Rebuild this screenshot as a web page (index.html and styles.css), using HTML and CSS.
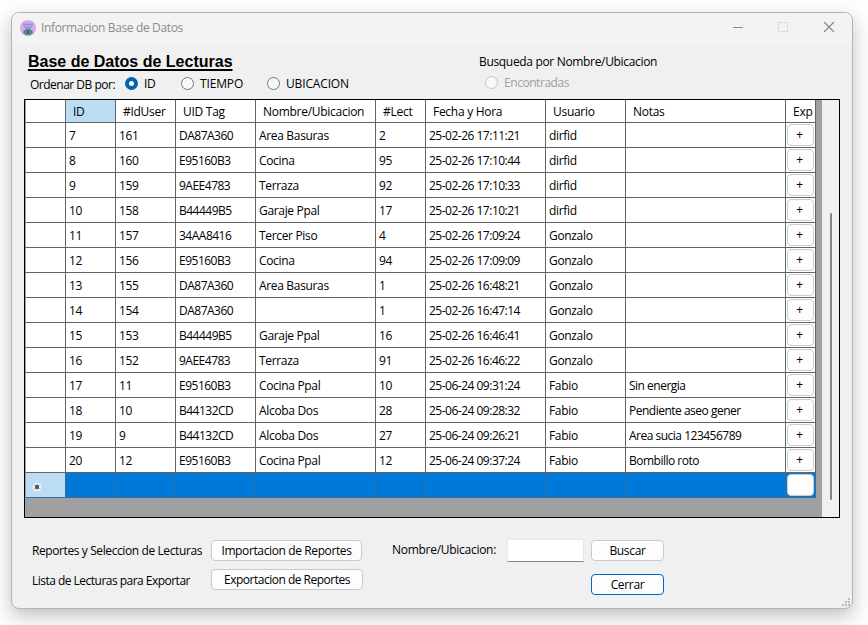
FILE: index.html
```html
<!DOCTYPE html>
<html lang="es">
<head>
<meta charset="utf-8">
<title>Informacion Base de Datos</title>
<link rel="stylesheet" href="styles.css">
</head>
<body>
<main class="window">
  <header class="titlebar">
    <svg class="app-icon" width="16" height="16" viewBox="0 0 16 16">
      <circle cx="8" cy="8" r="8" fill="#dcabea"/>
      <path d="M2 3.500Q8 1 14 3.500L12 8H4Z" fill="#b4a6e6"/>
      <path d="M3 4.500h10M4 7h8" stroke="#8c90d6" stroke-width="1.200"/>
      <path d="M5 8h6l-1 3H6Z" fill="#8296bc"/>
      <ellipse cx="8" cy="12.300" rx="5" ry="3.200" fill="#7397a0"/>
      <path d="M4 12q4-4 8 0q-4 4-8 0" fill="none" stroke="#4b6b74"/>
      <circle cx="8" cy="12" r="1.300" fill="#3c5a62"/>
    </svg>
    <span class="window-title">Informacion Base de Datos</span>
    <svg class="controls" width="104" height="12" viewBox="0 0 104 12" fill="none">
      <path d="M1 6.500h10" stroke="#8c8c8c"/>
      <rect x="46.500" y="1.500" width="9" height="9" stroke="#dcdcdc"/>
      <path d="M92 1l10 10M102 1L92 11" stroke="#858585" stroke-width="1.100"/>
    </svg>
  </header>

  <section class="top">
    <div class="sorting">
      <h1>Base de Datos de Lecturas</h1>
      <div class="options">
        <span class="order-label">Ordenar DB por:</span>
        <span class="option opt-id"><i class="radio checked"></i><span>ID</span></span>
        <span class="option opt-time"><i class="radio"></i><span>TIEMPO</span></span>
        <span class="option opt-place"><i class="radio"></i><span>UBICACION</span></span>
      </div>
    </div>
    <div class="search-info">
      <div class="search-title">Busqueda por Nombre/Ubicacion</div>
      <span class="option disabled"><i class="radio"></i><span>Encontradas</span></span>
    </div>
  </section>

  <section class="grid">
    <div class="rows">
      <div class="row head"><b></b><b class="sorted">ID</b><b>#IdUser</b><b>UID Tag</b><b>Nombre/Ubicacion</b><b>#Lect</b><b>Fecha y Hora</b><b>Usuario</b><b>Notas</b><b>Exp</b></div>
      <div class="row"><b></b><b>7</b><b>161</b><b>DA87A360</b><b>Area Basuras</b><b>2</b><b>25-02-26 17:11:21</b><b>dirfid</b><b></b><b><button>+</button></b></div>
      <div class="row"><b></b><b>8</b><b>160</b><b>E95160B3</b><b>Cocina</b><b>95</b><b>25-02-26 17:10:44</b><b>dirfid</b><b></b><b><button>+</button></b></div>
      <div class="row"><b></b><b>9</b><b>159</b><b>9AEE4783</b><b>Terraza</b><b>92</b><b>25-02-26 17:10:33</b><b>dirfid</b><b></b><b><button>+</button></b></div>
      <div class="row"><b></b><b>10</b><b>158</b><b>B44449B5</b><b>Garaje Ppal</b><b>17</b><b>25-02-26 17:10:21</b><b>dirfid</b><b></b><b><button>+</button></b></div>
      <div class="row"><b></b><b>11</b><b>157</b><b>34AA8416</b><b>Tercer Piso</b><b>4</b><b>25-02-26 17:09:24</b><b>Gonzalo</b><b></b><b><button>+</button></b></div>
      <div class="row"><b></b><b>12</b><b>156</b><b>E95160B3</b><b>Cocina</b><b>94</b><b>25-02-26 17:09:09</b><b>Gonzalo</b><b></b><b><button>+</button></b></div>
      <div class="row"><b></b><b>13</b><b>155</b><b>DA87A360</b><b>Area Basuras</b><b>1</b><b>25-02-26 16:48:21</b><b>Gonzalo</b><b></b><b><button>+</button></b></div>
      <div class="row"><b></b><b>14</b><b>154</b><b>DA87A360</b><b></b><b>1</b><b>25-02-26 16:47:14</b><b>Gonzalo</b><b></b><b><button>+</button></b></div>
      <div class="row"><b></b><b>15</b><b>153</b><b>B44449B5</b><b>Garaje Ppal</b><b>16</b><b>25-02-26 16:46:41</b><b>Gonzalo</b><b></b><b><button>+</button></b></div>
      <div class="row"><b></b><b>16</b><b>152</b><b>9AEE4783</b><b>Terraza</b><b>91</b><b>25-02-26 16:46:22</b><b>Gonzalo</b><b></b><b><button>+</button></b></div>
      <div class="row"><b></b><b>17</b><b>11</b><b>E95160B3</b><b>Cocina Ppal</b><b>10</b><b>25-06-24 09:31:24</b><b>Fabio</b><b>Sin energia</b><b><button>+</button></b></div>
      <div class="row"><b></b><b>18</b><b>10</b><b>B44132CD</b><b>Alcoba Dos</b><b>28</b><b>25-06-24 09:28:32</b><b>Fabio</b><b>Pendiente aseo gener</b><b><button>+</button></b></div>
      <div class="row"><b></b><b>19</b><b>9</b><b>B44132CD</b><b>Alcoba Dos</b><b>27</b><b>25-06-24 09:26:21</b><b>Fabio</b><b>Area sucia 123456789</b><b><button>+</button></b></div>
      <div class="row"><b></b><b>20</b><b>12</b><b>E95160B3</b><b>Cocina Ppal</b><b>12</b><b>25-06-24 09:37:24</b><b>Fabio</b><b>Bombillo roto</b><b><button>+</button></b></div>
      <div class="row selected"><b><svg width="8" height="8" viewBox="0 0 8 8"><circle cx="4" cy="4" r="3.900" fill="#fff"/><circle cx="4" cy="4" r="2" fill="#444"/><path d="M4 1v6M1.400 2.500l5.200 3M6.600 2.500l-5.200 3" stroke="#555" stroke-width="1"/></svg></b><b></b><b></b><b></b><b></b><b></b><b></b><b></b><b></b><b><button></button></b></div>
    </div>
    <div class="scrollbar"><div class="thumb"></div></div>
  </section>

  <footer class="bottom">
    <div class="labels">
      <span class="lbl-reports">Reportes y Seleccion de Lecturas</span>
      <span class="lbl-list">Lista de Lecturas para Exportar</span>
    </div>
    <div class="actions">
      <button class="btn import"><span>Importacion de Reportes</span></button>
      <button class="btn export"><span>Exportacion de Reportes</span></button>
    </div>
    <label class="search-label" for="q">Nombre/Ubicacion:</label>
    <input id="q" class="search-box" type="text">
    <div class="commands">
      <button class="btn">Buscar</button>
      <button class="btn primary">Cerrar</button>
    </div>
    <svg class="grip" width="9" height="9" viewBox="0 0 9 9" fill="#bcbcbc">
      <path d="M6 0h2v2H6zM3 3h2v2H3zM6 3h2v2H6zM0 6h2v2H0zM3 6h2v2H3zM6 6h2v2H6z"/>
    </svg>
  </footer>
</main>
</body>
</html>
```
FILE: styles.css
```css
* { box-sizing: border-box; }
body {
  margin: 0;
  height: 625px;
  padding: 12px 0 0 11px;
  overflow: hidden;
  background: #fdfdfd;
  color: #000;
  font: 12px/16px "Open Sans", "Noto Sans", sans-serif;
  letter-spacing: -0.33px;
  white-space: nowrap;
}
button, input { font: inherit; letter-spacing: inherit; color: inherit; padding: 0; }
.window {
  width: 842px;
  height: 597px;
  border: 1px solid #b4b4b4;
  border-radius: 8px;
  background: #f0f0f0;
  box-shadow: 0 7px 18px rgba(0, 0, 0, .24);
  overflow: hidden;
}
.titlebar {
  display: flex;
  align-items: center;
  height: 31px;
  padding: 0 16px 0 8px;
  background: #f3f3f3;
  color: #8c8c8c;
}
.app-icon { margin-right: 5px; margin-top: -2px; }
.window-title { margin-top: -2px; letter-spacing: -0.36px; }
.controls { margin-left: auto; margin-top: -3px; }

.top { display: flex; height: 55px; padding-left: 16px; }
.sorting { width: 451px; }
h1 {
  margin: 8px 0 0;
  font: bold 16px/20px "Liberation Sans", Arial, sans-serif;
  letter-spacing: 0;
  text-decoration: underline;
  text-decoration-thickness: 2px;
  text-underline-offset: 2px;
}
.options { display: flex; height: 16px; margin-top: 4px; padding-left: 2px; }
.order-label { width: 95px; margin-top: 1px; letter-spacing: -0.5px; }
.option { display: flex; align-items: center; gap: 6px; height: 16px; }
.opt-id { width: 56px; }
.opt-time { width: 86px; }
.opt-place, .opt-time { letter-spacing: -0.15px; }
.radio {
  width: 13px;
  height: 13px;
  margin-top: -1px;
  border: 1px solid #777;
  border-radius: 50%;
  background: #f8f8f8;
}
.radio.checked { border: 4px solid #0560b6; background: #fff; }
.search-title { margin-top: 10px; }
.disabled { margin: 5px 0 0 6px; color: #a0a0a0; letter-spacing: -0.45px; }
.disabled .radio { border-color: #c6c6c6; }

.grid {
  display: flex;
  justify-content: space-between;
  width: 816px;
  height: 419px;
  margin-left: 12px;
  border: 1px solid #000;
  background: #a0a0a0;
}
.row {
  display: grid;
  grid-template-columns: 41px 50px 60px 80px 120px 50px 120px 80px 160px 30px;
  grid-template-rows: 100%;
  height: 25px;
}
.row b {
  padding-left: 3px;
  border: solid #646464;
  border-width: 0 1px 1px 0;
  background: #fff;
  font-weight: 400;
  line-height: 25px;
}
.row b:nth-child(4), .row b:nth-child(7), .row b:nth-child(9) { letter-spacing: -0.5px; }
.head { height: 23px; }
.row.head b { padding-left: 7px; line-height: 24px; letter-spacing: -0.28px; }
.head .sorted { background: #bcdcf4; }
.row b:first-child { border-left: 1px solid #a0a0a0; }
.row button {
  display: block;
  width: 27px;
  height: 22px;
  margin: 1px 0 0 -2px;
  padding-right: 2px;
  border: 1px solid #ccc;
  border-radius: 4px;
  background: #fdfdfd;
  line-height: 20px;
}
.selected b { background: #0078d7; border-color: #366e9e; }
.selected b:first-child { background: #bcdcf4; padding-left: 7px; }
.selected svg { display: block; margin-top: 10px; }
.scrollbar { width: 17px; background: #f0f0f0; padding: 113px 0 0 8px; }
.thumb { width: 2px; height: 287px; border-radius: 1px; background: #858585; }

.bottom { position: relative; display: flex; padding: 22px 0 0 20px; height: 90px; }
.labels { display: flex; flex-direction: column; gap: 14px; width: 179px; padding-top: 3px; }
.lbl-reports { letter-spacing: -0.4px; }
.lbl-list { letter-spacing: -0.52px; }
.actions { display: flex; flex-direction: column; gap: 8px; width: 181px; }
.btn {
  display: block;
  width: 73px;
  height: 21px;
  border: 1px solid #cacaca;
  border-radius: 4px;
  background: #fdfdfd;
  line-height: 18px;
}
.import { width: 151px; letter-spacing: -0.38px; }
.export { width: 152px; letter-spacing: -0.5px; }
.search-label { width: 115px; padding-top: 2px; letter-spacing: -0.28px; }
.search-box {
  width: 77px;
  height: 23px;
  margin-top: -1px;
  border: 1px solid #e8e8e8;
  border-bottom-color: #858585;
  background: #fff;
}
.commands { display: flex; flex-direction: column; gap: 13px; margin-left: 7px; }
.primary { border-color: #0067c0; }
.grip { position: absolute; right: 1px; bottom: 1px; }
```
